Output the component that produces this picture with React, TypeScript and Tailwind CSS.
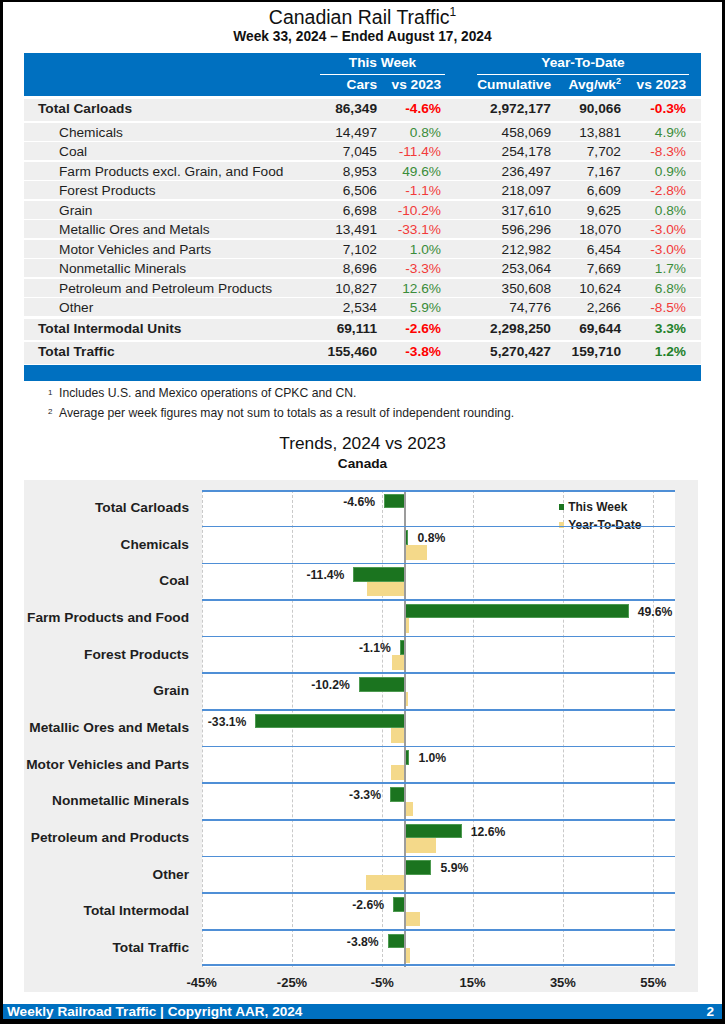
import React from "react";

type Row = { label: string; bold?: boolean; cars: string; vs: string; cum: string; avg: string; ytd: string };

const rows: Row[] = [
  { label: "Total Carloads", bold: true, cars: "86,349", vs: "-4.6%", cum: "2,972,177", avg: "90,066", ytd: "-0.3%" },
  { label: "Chemicals", cars: "14,497", vs: "0.8%", cum: "458,069", avg: "13,881", ytd: "4.9%" },
  { label: "Coal", cars: "7,045", vs: "-11.4%", cum: "254,178", avg: "7,702", ytd: "-8.3%" },
  { label: "Farm Products excl. Grain, and Food", cars: "8,953", vs: "49.6%", cum: "236,497", avg: "7,167", ytd: "0.9%" },
  { label: "Forest Products", cars: "6,506", vs: "-1.1%", cum: "218,097", avg: "6,609", ytd: "-2.8%" },
  { label: "Grain", cars: "6,698", vs: "-10.2%", cum: "317,610", avg: "9,625", ytd: "0.8%" },
  { label: "Metallic Ores and Metals", cars: "13,491", vs: "-33.1%", cum: "596,296", avg: "18,070", ytd: "-3.0%" },
  { label: "Motor Vehicles and Parts", cars: "7,102", vs: "1.0%", cum: "212,982", avg: "6,454", ytd: "-3.0%" },
  { label: "Nonmetallic Minerals", cars: "8,696", vs: "-3.3%", cum: "253,064", avg: "7,669", ytd: "1.7%" },
  { label: "Petroleum and Petroleum Products", cars: "10,827", vs: "12.6%", cum: "350,608", avg: "10,624", ytd: "6.8%" },
  { label: "Other", cars: "2,534", vs: "5.9%", cum: "74,776", avg: "2,266", ytd: "-8.5%" },
  { label: "Total Intermodal Units", bold: true, cars: "69,111", vs: "-2.6%", cum: "2,298,250", avg: "69,644", ytd: "3.3%" },
  { label: "Total Traffic", bold: true, cars: "155,460", vs: "-3.8%", cum: "5,270,427", avg: "159,710", ytd: "1.2%" },
];

const rowBox = (i: number) => {
  if (i === 0) return "mt-[2.5px] h-[22.5px]";
  if (i === 11) return "mt-[3px] h-[20.5px]";
  if (i === 12) return "mt-[2.5px] h-[21.5px]";
  return "mt-[1.5px] h-[18px] pb-[1px]";
};

const pctColor = (v: string, bold?: boolean) => {
  const neg = v.startsWith("-");
  if (neg) return bold ? "text-[#ff0000]" : "text-[#f23a3a]";
  return bold ? "text-[#24812a]" : "text-[#3a8c3a]";
};

const grid = "grid grid-cols-[296px_61px_64px_32px_78px_70px_64px_10px]";

type Cat = { label: string; tw: number; ytd: number };
const cats: Cat[] = [
  { label: "Total Carloads", tw: -4.6, ytd: -0.3 },
  { label: "Chemicals", tw: 0.8, ytd: 4.9 },
  { label: "Coal", tw: -11.4, ytd: -8.3 },
  { label: "Farm Products and Food", tw: 49.6, ytd: 0.9 },
  { label: "Forest Products", tw: -1.1, ytd: -2.8 },
  { label: "Grain", tw: -10.2, ytd: 0.8 },
  { label: "Metallic Ores and Metals", tw: -33.1, ytd: -3.0 },
  { label: "Motor Vehicles and Parts", tw: 1.0, ytd: -3.0 },
  { label: "Nonmetallic Minerals", tw: -3.3, ytd: 1.7 },
  { label: "Petroleum and Products", tw: 12.6, ytd: 6.8 },
  { label: "Other", tw: 5.9, ytd: -8.5 },
  { label: "Total Intermodal", tw: -2.6, ytd: 3.3 },
  { label: "Total Traffic", tw: -3.8, ytd: 1.2 },
];

const P = 36.66;
const S = 4.515;
const Z = 45 * S;
const PW = 473.6;
const PH = 13 * P;
const gridX = [0, 20, 40, 60, 80, 100].map((d) => d * S);
const axis = ["-45%", "-25%", "-5%", "15%", "35%", "55%"];

function Chart() {
  return (
    <div className="mt-[8px] ml-[21px] w-[674px] h-[512px] bg-[#efefef] pt-[10px] flex flex-col">
      <div className="flex">
        <div className="w-[165px] flex flex-col">
          {cats.map((c) => (
            <div key={c.label} className="h-[36.66px] flex items-center justify-end text-[13.7px] font-bold text-[#1e1e1e] whitespace-nowrap">
              {c.label}
            </div>
          ))}
        </div>
        <div className="ml-[12.7px] relative w-[473.6px] h-[476.6px] bg-white">
          {gridX.map((x, i) => (
            <div key={i} className="absolute top-0 bottom-0 border-l border-dashed border-[#c9c9c9]" style={{ left: x }} />
          ))}
          {cats.map((c, i) => {
            const top = i * P;
            const w1 = Math.abs(c.tw) * S;
            const w2 = Math.abs(c.ytd) * S;
            const l1 = c.tw < 0 ? Z - w1 : Z;
            const l2 = c.ytd < 0 ? Z - w2 : Z;
            const labelStyle: React.CSSProperties =
              c.tw < 0
                ? { right: PW - l1 + 9, top: top + 11.7 }
                : { left: Z + w1 + 9, top: top + 11.7 };
            return (
              <React.Fragment key={c.label}>
                <div className="absolute bg-[#1b741f] border border-[#4d9a50]" style={{ left: l1, width: w1, top: top + 3.8, height: 14.6 }} />
                <div className="absolute bg-[#f4d98a]" style={{ left: l2, width: w2, top: top + 18.4, height: 14.6 }} />
                <div className="absolute -translate-y-1/2 text-[12.2px] leading-none font-bold text-[#1e1e1e] whitespace-nowrap" style={labelStyle}>
                  {c.tw.toFixed(1)}%
                </div>
              </React.Fragment>
            );
          })}
          <div className="absolute top-0 bottom-0 w-[1.5px] bg-[#9c9c9c]" style={{ left: Z - 0.5 }} />
          <div className="absolute left-[357px] top-[10px] flex flex-col gap-[4px] text-[12px] leading-[14px] font-bold text-[#1e1e1e]">
            <div className="flex items-center gap-[4px]">
              <span className="w-[5.5px] h-[5.5px] bg-[#1b741f]" />
              <span>This Week</span>
            </div>
            <div className="flex items-center gap-[4px]">
              <span className="w-[5.5px] h-[5.5px] bg-[#f4d98a]" />
              <span>Year-To-Date</span>
            </div>
          </div>
          {Array.from({ length: 14 }).map((_, i) => (
            <div key={i} className="absolute left-0 right-0 h-[1.6px] bg-[#4f8fd6]" style={{ top: Math.min(i * P, PH - 1.6) - (i === 0 ? 0 : 0.8) }} />
          ))}
        </div>
      </div>
      <div className="relative h-[16px] mt-[8.4px]">
        {axis.map((a, i) => (
          <div key={a} className="absolute top-0 -translate-x-1/2 text-[13px] leading-[16px] font-bold text-[#1e1e1e]" style={{ left: 177.7 + gridX[i] }}>
            {a}
          </div>
        ))}
      </div>
    </div>
  );
}

export default function App() {
  return (
    <div className="w-[725px] h-[1024px] bg-black pt-[2px] pl-[3px] pr-[3px] pb-[5px] font-['Liberation_Sans',Arial,sans-serif]">
      <div className="w-full h-full bg-white flex flex-col relative">
        <div className="mt-[4px] h-[22px] text-center text-[19.5px] leading-[22px] text-[#111]">
          Canadian Rail Traffic<sup className="text-[12px] relative -top-[8px]">1</sup>
        </div>
        <div className="mt-[1px] h-[16px] text-center text-[13.75px] leading-[16px] font-bold text-[#111]">
          Week 33, 2024 – Ended August 17, 2024
        </div>
        <div className="mt-[8px] mx-[21px] flex flex-col">
          <div className="bg-[#0070c0] h-[43px] text-white font-bold text-[13.7px] flex flex-col">
            <div className={`${grid} h-[22px]`}>
              <div />
              <div className="col-span-2 border-b border-white flex items-center justify-center">This Week</div>
              <div />
              <div className="col-span-3 border-b border-white flex items-center justify-center">Year-To-Date</div>
              <div />
            </div>
            <div className={`${grid} h-[20px] items-center`}>
              <div />
              <div className="text-right pr-[4px]">Cars</div>
              <div className="text-right pr-[4px]">vs 2023</div>
              <div />
              <div className="text-right pr-[4px]">Cumulative</div>
              <div className="text-right pr-[4px]">
                Avg/wk<sup className="text-[9px] relative -top-[5px]">2</sup>
              </div>
              <div className="text-right pr-[3px]">vs 2023</div>
              <div />
            </div>
          </div>
          {rows.map((r, i) => (
            <div key={r.label} className={`${grid} ${rowBox(i)} bg-[#efefef] items-center text-[13.7px] text-[#1e1e1e] ${r.bold ? "font-bold" : ""}`}>
              <div className={r.bold ? "pl-[14px] whitespace-nowrap" : "pl-[35px] whitespace-nowrap"}>{r.label}</div>
              <div className="text-right pr-[4px]">{r.cars}</div>
              <div className={`text-right pr-[4px] ${pctColor(r.vs, r.bold)}`}>{r.vs}</div>
              <div />
              <div className="text-right pr-[4px]">{r.cum}</div>
              <div className="text-right pr-[4px]">{r.avg}</div>
              <div className={`text-right pr-[3px] ${pctColor(r.ytd, r.bold)}`}>{r.ytd}</div>
              <div />
            </div>
          ))}
          <div className="mt-[1.5px] h-[16px] bg-[#0070c0]" />
        </div>
        <div className="mt-[2.5px] text-[12.2px] text-[#1e1e1e]">
          <div className="h-[19.5px] flex items-center pl-[45px]">
            <span className="w-[11px] text-[8px] self-start mt-[3px]">1</span>
            <span>Includes U.S. and Mexico operations of CPKC and CN.</span>
          </div>
          <div className="h-[19.5px] flex items-center pl-[45px]">
            <span className="w-[11px] text-[8px] self-start mt-[3px]">2</span>
            <span>Average per week figures may not sum to totals as a result of independent rounding.</span>
          </div>
        </div>
        <div className="mt-[9.2px] h-[22px] text-center text-[17.3px] leading-[22px] text-[#111]">Trends, 2024 vs 2023</div>
        <div className="mt-[2.3px] h-[16px] text-center text-[13.65px] leading-[16px] font-bold text-[#111]">Canada</div>
        <Chart />
        <div className="mt-auto h-[15px] bg-[#0070c0] flex items-center justify-between pl-[4px] pr-[8px] text-white font-bold text-[13.6px] leading-[15px]">
          <span>Weekly Railroad Traffic | Copyright AAR, 2024</span>
          <span>2</span>
        </div>
      </div>
    </div>
  );
}
